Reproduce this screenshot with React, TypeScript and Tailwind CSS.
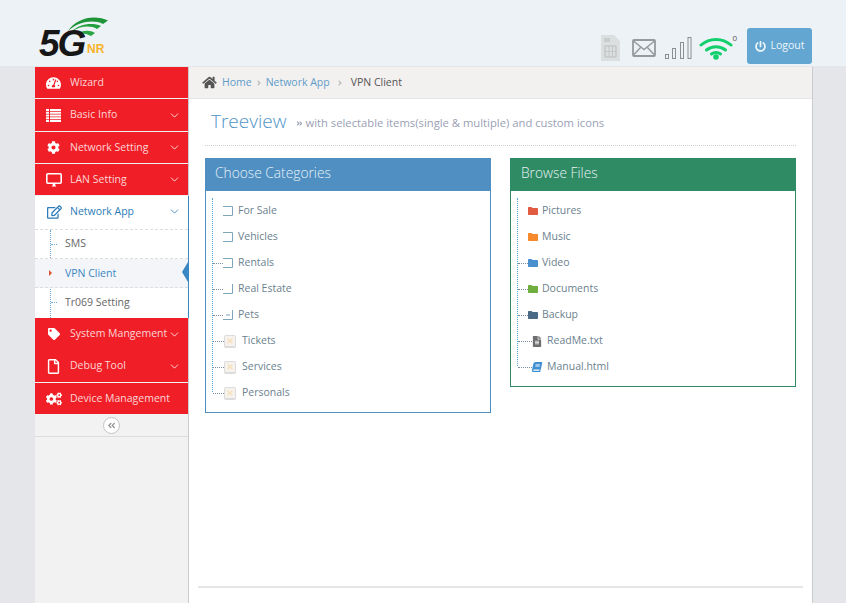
import React from "react";
import {
  FaTachometerAlt,
  FaCog,
  FaRegEdit,
  FaTag,
  FaRegFile,
  FaCogs,
  FaHome,
  FaPowerOff,
  FaFileAlt,
  FaBook,
  FaTimes,
  FaAngleDoubleLeft,
  FaAngleDoubleRight,
  FaAngleRight,
} from "react-icons/fa";
import { ChevronDown } from "lucide-react";

type IconComp = React.ComponentType<{ className?: string; style?: React.CSSProperties }>;

const ListIcon: IconComp = ({ className }) => (
  <svg viewBox="0 0 15 13" className={className} fill="currentColor">
    <rect x="0" y="0" width="3" height="2" />
    <rect x="0" y="2.750" width="3" height="2" />
    <rect x="0" y="5.500" width="3" height="2" />
    <rect x="0" y="8.250" width="3" height="2" />
    <rect x="0" y="11" width="3" height="2" />
    <rect x="4" y="0" width="11" height="2" />
    <rect x="4" y="2.750" width="11" height="2" />
    <rect x="4" y="5.500" width="11" height="2" />
    <rect x="4" y="8.250" width="11" height="2" />
    <rect x="4" y="11" width="11" height="2" />
  </svg>
);

const MonitorIcon: IconComp = ({ className }) => (
  <svg viewBox="0 0 16 14" className={className}>
    <rect x="0.800" y="0.800" width="14.400" height="9.400" rx="1" fill="none" stroke="currentColor" strokeWidth="1.600" />
    <path d="M5.500 13.500c1-.5 1.300-1.500 1.300-3h2.400c0 1.500.3 2.500 1.300 3z" fill="currentColor" />
  </svg>
);

const FolderIcon: IconComp = ({ className, style }) => (
  <svg viewBox="0 0 10 8" className={className} style={style} fill="currentColor">
    <path d="M0 1c0-.6.4-1 1-1h2.500l1 1H9c.6 0 1 .4 1 1v5c0 .6-.4 1-1 1H1c-.6 0-1-.4-1-1z" />
  </svg>
);

interface MenuItem {
  label: string;
  Icon: IconComp;
  iconClass: string;
  chevron?: boolean;
  heightClass: string;
  gapless?: boolean;
}

const TOP_MENU: MenuItem[] = [
  { label: "Wizard", Icon: FaTachometerAlt, iconClass: "w-[15px] h-[14px]", heightClass: "h-[31px]" },
  { label: "Basic Info", Icon: ListIcon, iconClass: "w-[15px] h-[13px]", chevron: true, heightClass: "h-[32px]" },
  { label: "Network Setting", Icon: FaCog, iconClass: "w-[13px] h-[13px] ml-px", chevron: true, heightClass: "h-[31px]" },
  { label: "LAN Setting", Icon: MonitorIcon, iconClass: "w-[16px] h-[14px]", chevron: true, heightClass: "h-[31px]" },
];

const BOTTOM_MENU: MenuItem[] = [
  { label: "System Mangement", Icon: FaTag, iconClass: "w-[12px] h-[12px] ml-[2px]", chevron: true, heightClass: "h-[32px]", gapless: true },
  { label: "Debug Tool", Icon: FaRegFile, iconClass: "w-[13px] h-[15px] ml-px", chevron: true, heightClass: "h-[32px]" },
  { label: "Device Management", Icon: FaCogs, iconClass: "w-[16px] h-[14px]", heightClass: "h-[31px]" },
];

const RedItem = ({ item }: { item: MenuItem }) => (
  <div
    className={`${item.heightClass} ${item.gapless ? "" : "mb-px"} flex items-center bg-[#f01f27] text-[#fbd5d6] pl-[11px] pr-[7px] text-[10.5px]`}
  >
    <span className="w-[24px] flex justify-start text-white">
      <item.Icon className={item.iconClass} />
    </span>
    <span className="flex-1 whitespace-nowrap">{item.label}</span>
    {item.chevron && <ChevronDown size={13} strokeWidth={1.5} className="text-white" />}
  </div>
);

const Sidebar = () => (
  <aside className="w-[154px] shrink-0 bg-[#f2f2f2] border-r border-[#c9cbce] flex flex-col">
    {TOP_MENU.map((item) => (
      <RedItem key={item.label} item={item} />
    ))}
    <div className="bg-white border-r border-[#3a87c4] -mr-px">
      <div className="h-[34px] flex items-center pl-[12px] pr-[7px] pb-[2px] text-[10.5px] text-[#2c7cb8] border-b border-dashed border-[#dddddd]">
        <span className="w-[23px]">
          <FaRegEdit className="w-[15px] h-[14px]" />
        </span>
        <span className="flex-1">Network App</span>
        <ChevronDown size={13} strokeWidth={1.5} />
      </div>
      <div className="relative">
        <div className="absolute left-[15px] top-0 bottom-0 border-l border-dotted border-[#6aa7d2]" />
        <div className="relative h-[29px] flex items-center pl-[30px] text-[10.5px] text-[#666666] border-b border-dashed border-[#dddddd]">
          <span className="absolute left-[16px] top-[14px] w-[6px] border-t border-dotted border-[#6aa7d2]" />
          SMS
        </div>
        <div className="relative h-[29px] flex items-center pl-[30px] pt-[2px] text-[10.5px] text-[#3a87c4] bg-[#f3f5f9] border-b border-dashed border-[#dddddd]">
          <span className="absolute left-[14px] top-[11px] border-y-[3px] border-y-transparent border-l-[3px] border-l-[#d9532c]" />
          VPN Client
          <span className="absolute right-0 top-[3px] w-[6px] h-[20px] bg-[#3a87c4] [clip-path:polygon(100%_0,100%_100%,0_50%)]" />
        </div>
        <div className="relative h-[30px] flex items-center pl-[30px] text-[10.5px] text-[#666666]">
          <span className="absolute left-[16px] top-[14px] w-[6px] border-t border-dotted border-[#6aa7d2]" />
          Tr069 Setting
        </div>
      </div>
    </div>
    {BOTTOM_MENU.map((item) => (
      <RedItem key={item.label} item={item} />
    ))}
    <div className="h-[22px] flex items-center justify-center border-b border-[#dddddd]">
      <span className="w-[17px] h-[17px] rounded-full border border-[#c4c4c4] bg-white flex items-center justify-center text-[#999999]">
        <FaAngleDoubleLeft className="w-[9px] h-[9px]" />
      </span>
    </div>
  </aside>
);

const HeaderIcons = () => (
  <div className="flex items-end">
    {/* sim card */}
    <svg width="20" height="26" viewBox="0 0 20 26" className="mb-[5px]">
      <path d="M1 0h13l6 6v20H1z" fill="#dcdfdf" />
      <rect x="5" y="11" width="11" height="11" rx="1" fill="none" stroke="#c4c7c7" strokeWidth="1.500" />
      <path d="M9 11v11M12.500 11v11M5 16.500h11" stroke="#c4c7c7" strokeWidth="1" />
      <rect x="4" y="3" width="6" height="4" fill="#c9cccc" />
    </svg>
    {/* mail */}
    <svg width="24" height="18" viewBox="0 0 24 18" className="ml-[12px] mb-[9px]">
      <rect x="1" y="1" width="22" height="16" rx="1" fill="none" stroke="#969a9c" strokeWidth="1.800" />
      <path d="M1.500 2l10.500 8.500L22.500 2M1.500 16l7.500-8M22.500 16l-7.500-8" fill="none" stroke="#969a9c" strokeWidth="1.500" />
    </svg>
    {/* signal */}
    <svg width="27" height="22" viewBox="0 0 27 22" className="ml-[9px] mb-[7px]">
      <g fill="none" stroke="#8b8f92" strokeWidth="1">
        <rect x="0.500" y="17.500" width="3" height="4" />
        <rect x="7.500" y="11.500" width="3" height="10" />
        <rect x="15.500" y="5.500" width="3" height="16" />
        <rect x="23" y="0.500" width="3" height="21" />
      </g>
    </svg>
    {/* wifi */}
    <div className="relative ml-[7px] mb-[6px]">
      <svg width="34" height="25" viewBox="0 0 34 25" className="block">
        <g fill="none" stroke="#10cf6c" strokeWidth="3" strokeLinecap="round">
          <path d="M2 10c8.500-7.500 21.500-7.500 30 0" />
          <path d="M7.500 15c5.500-4.500 13.500-4.500 19 0" />
          <path d="M12.500 19c2.500-2 6.500-2 9 0" />
        </g>
        <circle cx="17" cy="22" r="2.800" fill="#10cf6c" />
      </svg>
      <span className="absolute -right-[4px] top-[-1px] text-[8px] leading-none text-[#555555]">0</span>
    </div>
  </div>
);

const Header = () => (
  <header className="h-[66px] shrink-0 bg-[#edf2f6] flex items-end justify-between">
    <div className="ml-[39px] mb-[7px] relative w-[72px] h-[44px]">
      <svg width="40" height="20" viewBox="0 0 40 20" className="absolute left-[29px] top-[2px]">
        <path d="M0 14C6 5 16 .5 26 .5c5 0 10 1 14 3l-5 3.500C26 2.500 11 4 0 14z" fill="#1c9437" />
        <path d="M3 15C11 7 24 5 33 9l-4 3C22 8 12 9 3 15z" fill="#22a03f" />
        <path d="M8 17c7-4 14-4 19-1l-4 3c-5-3-10-3-15-2z" fill="#2aa546" />
      </svg>
      <span className="absolute left-0 top-[10px] font-['Liberation_Sans',sans-serif] font-bold italic text-[37px] leading-none tracking-[-2px] text-[#161616]">
        5G
      </span>
      <span className="absolute left-[48px] top-[28px] font-['Liberation_Sans',sans-serif] font-bold text-[12px] leading-none text-[#f7b32b]">
        NR
      </span>
    </div>
    <div className="flex items-end mr-[34px]">
      <HeaderIcons />
      <button className="ml-[14px] mb-[2px] w-[65px] h-[36px] rounded-[3px] bg-[#62a6d1] text-[#eef5fa] text-[10.5px] flex items-center justify-center gap-[5px]">
        <FaPowerOff className="w-[11px] h-[11px]" />
        Logout
      </button>
    </div>
  </header>
);

const Connector = ({ w, show = true }: { w: number; show?: boolean }) => (
  <span
    className={`shrink-0 h-0 ${show ? "border-t border-dotted border-[#7a8fa3]" : ""}`}
    style={{ width: w }}
  />
);

type BoxKind = "full" | "open" | "dash";

const TreeBox = ({ kind }: { kind: BoxKind }) => (
  <svg width="10" height="10" viewBox="0 0 10 10" className="shrink-0">
    <g fill="none" stroke="#7fa5bb" strokeWidth="1">
      {kind === "full" && <path d="M0 .5h9.500v9H0" />}
      {kind === "open" && <path d="M9.500 0v9.500H0" />}
      {kind === "dash" && <path d="M9.500 0v9.500H0M3 5h4" />}
    </g>
  </svg>
);

const CheckedBox = () => (
  <span className="shrink-0 w-[12px] h-[13px] rounded-[2px] bg-[#f6f3ee] border border-[#dcdcdc] border-b-2 flex items-center justify-center">
    <FaTimes className="w-[8px] h-[8px] text-[#f8dfbc]" />
  </span>
);

const TreeRow = ({
  label,
  children,
  connector,
  connectorW,
  gap,
}: {
  label: string;
  children: React.ReactNode;
  connector: boolean;
  connectorW: number;
  gap: number;
}) => (
  <li className="h-[26px] flex items-center text-[10.5px] text-[#6b7f8e]">
    <Connector w={connectorW} show={connector} />
    {children}
    <span className="whitespace-nowrap" style={{ marginLeft: gap }}>
      {label}
    </span>
  </li>
);

const Panel = ({
  title,
  headerClass,
  sectionClass,
  lineClass,
  children,
}: {
  title: string;
  headerClass: string;
  sectionClass: string;
  lineClass: string;
  children: React.ReactNode;
}) => (
  <section className={`border ${sectionClass}`}>
    <div className={`h-[33px] -mt-px -mx-px flex items-center pb-[3px] text-[13.750px] font-light text-[#e8f1f6] ${headerClass}`}>
      {title}
    </div>
    <ul className={`ml-[6px] mt-[7px] border-l border-dotted border-[#5aa7dc] ${lineClass}`}>
      {children}
    </ul>
  </section>
);

const CATEGORIES: { label: string; kind?: BoxKind; connector: boolean }[] = [
  { label: "For Sale", kind: "full", connector: false },
  { label: "Vehicles", kind: "full", connector: false },
  { label: "Rentals", kind: "full", connector: true },
  { label: "Real Estate", kind: "open", connector: true },
  { label: "Pets", kind: "dash", connector: true },
  { label: "Tickets", connector: true },
  { label: "Services", connector: true },
  { label: "Personals", connector: true },
];

const FILES: { label: string; color: string; Icon: IconComp; iconClass: string; file?: boolean }[] = [
  { label: "Pictures", color: "#e05b40", Icon: FolderIcon, iconClass: "w-[10px] h-[8px]" },
  { label: "Music", color: "#f6892b", Icon: FolderIcon, iconClass: "w-[10px] h-[8px]" },
  { label: "Video", color: "#4a90cf", Icon: FolderIcon, iconClass: "w-[10px] h-[8px]" },
  { label: "Documents", color: "#6fae3f", Icon: FolderIcon, iconClass: "w-[10px] h-[8px]" },
  { label: "Backup", color: "#4a6a85", Icon: FolderIcon, iconClass: "w-[10px] h-[8px]" },
  { label: "ReadMe.txt", color: "#6e6e6e", Icon: FaFileAlt, iconClass: "w-[10px] h-[11px]", file: true },
  { label: "Manual.html", color: "#3f8fd2", Icon: FaBook, iconClass: "w-[10px] h-[10px] -skew-x-12", file: true },
];

const Main = () => (
  <main className="flex-1 bg-white relative flex flex-col">
    <div className="h-[32px] shrink-0 bg-[#f3f0f0] border-b border-[#e6e6e6] flex items-center pl-[13px] text-[10.5px]">
      <FaHome className="w-[15px] h-[13px] text-[#555555] mr-[5px]" />
      <span className="text-[#5f9dc9]">Home</span>
      <FaAngleRight className="w-[8px] h-[8px] text-[#bbbbbb] mx-[3px]" />
      <span className="text-[#5f9dc9]">Network App</span>
      <FaAngleRight className="w-[8px] h-[8px] text-[#bbbbbb] ml-[6px] mr-[7px]" />
      <span className="text-[#555555]">VPN Client</span>
    </div>
    <div className="mx-[16px] h-[47px] border-b border-dotted border-[#d0d0d0] flex items-center pl-[6px]">
      <span className="text-[19px] font-light text-[#4f94c8] leading-none mr-[10px] -mt-[2px]">Treeview</span>
      <FaAngleDoubleRight className="w-[7px] h-[7px] text-[#9aa0b5] mr-[2px] mt-[3px]" />
      <span className="text-[11.250px] text-[#9aa0b5] mt-[3px]">with selectable items(single &amp; multiple) and custom icons</span>
    </div>
    <div className="mx-[16px] mt-[12px] grid grid-cols-[286px_286px] gap-x-[19px] items-start">
      <Panel title="Choose Categories" headerClass="bg-[#4f8fc2] pl-[10px]" sectionClass="border-[#4f8fc2] h-[255px]" lineClass="h-[194px]">
        {CATEGORIES.map((c) => (
          <TreeRow
            key={c.label}
            label={c.label}
            connector={c.connector}
            connectorW={c.kind ? 10 : 11}
            gap={c.kind ? 5 : 6}
          >
            {c.kind ? <TreeBox kind={c.kind} /> : <CheckedBox />}
          </TreeRow>
        ))}
      </Panel>
      <Panel title="Browse Files" headerClass="bg-[#2e8b63] pl-[11px]" sectionClass="border-[#2e8b63] h-[229px]" lineClass="h-[168px]">
        {FILES.map((f, i) => (
          <TreeRow
            key={f.label}
            label={f.label}
            connector={i >= 2}
            connectorW={f.file ? 14 : 10}
            gap={f.file ? 5 : 4}
          >
            <f.Icon className={f.iconClass} style={{ color: f.color }} />
          </TreeRow>
        ))}
      </Panel>
    </div>
    <div className="absolute left-[9px] right-[9px] bottom-[15px] h-[2px] bg-[#e5e5e5]" />
  </main>
);

export default function App() {
  return (
    <div className="h-screen overflow-hidden bg-[#e4e6ea] flex flex-col font-['Open_Sans',sans-serif]">
      <Header />
      <div className="flex-1 flex mr-[33px] ml-[35px] border-r border-[#c9cbce] min-h-0 mt-px">
        <Sidebar />
        <Main />
      </div>
    </div>
  );
}
